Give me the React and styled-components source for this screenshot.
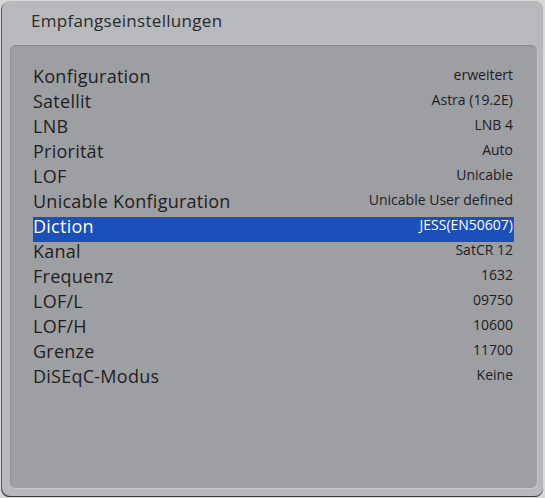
import React from "react";
import styled, { createGlobalStyle } from "styled-components";

const Global = createGlobalStyle`
  html, body { margin: 0; padding: 0; background: #d9d9d9; }
  body { width: 545px; height: 498px; overflow: hidden; }
`;

const Window = styled.div`
  box-sizing: border-box;
  margin: 1px 0 0 2px;
  width: 541px;
  height: 495px;
  border-radius: 8px;
  background: #b7b9bc;
  box-shadow: 0 1px 0 #3a3a3a, -1px 1px 0 #5a5a5c;
  display: flex;
  flex-direction: column;
  font-family: "Open Sans", "Noto Sans", sans-serif;
`;

const Title = styled.div`
  box-sizing: border-box;
  height: 44px;
  padding: 0 0 6px 29px;
  display: flex;
  align-items: center;
  font-size: 17px;
  color: #2a2a2b;
  letter-spacing: 0.3px;
`;

const Panel = styled.div`
  box-sizing: border-box;
  margin: 0 6px 0 8px;
  height: 443px;
  border-radius: 6px;
  background: #9e9fa3;
  border-top: 1px solid #8a8b8f;
  border-left: 1px solid #929397;
  box-shadow: 1px 1px 0 #c6c7ca;
  padding: 21px 23px 0 22px;
`;

const Row = styled.div`
  box-sizing: border-box;
  height: 25px;
  padding-bottom: 8px;
  display: flex;
  align-items: center;
  justify-content: space-between;
  background: ${(p) => (p.$active ? "#1b4fb9" : "transparent")};
  color: ${(p) => (p.$active ? "#ffffff" : "#1e1e20")};
`;

const Label = styled.span`
  font-size: 18px;
  letter-spacing: 0.25px;
  white-space: nowrap;
`;

const Value = styled.span`
  font-size: 14px;
  padding-right: 1px;
  margin-bottom: 3px;
  white-space: nowrap;
  color: ${(p) => (p.$active ? "#ffffff" : "#202022")};
`;

const rows = [
  ["Konfiguration", "erweitert"],
  ["Satellit", "Astra (19.2E)"],
  ["LNB", "LNB 4"],
  ["Priorität", "Auto"],
  ["LOF", "Unicable"],
  ["Unicable Konfiguration", "Unicable User defined"],
  ["Diction", "JESS(EN50607)"],
  ["Kanal", "SatCR 12"],
  ["Frequenz", "1632"],
  ["LOF/L", "09750"],
  ["LOF/H", "10600"],
  ["Grenze", "11700"],
  ["DiSEqC-Modus", "Keine"],
];

export default function App() {
  return (
    <>
      <Global />
      <Window>
        <Title>Empfangseinstellungen</Title>
        <Panel>
          {rows.map(([l, v], i) => (
            <Row key={l} $active={i === 6}>
              <Label>{l}</Label>
              <Value $active={i === 6}>{v}</Value>
            </Row>
          ))}
        </Panel>
      </Window>
    </>
  );
}
